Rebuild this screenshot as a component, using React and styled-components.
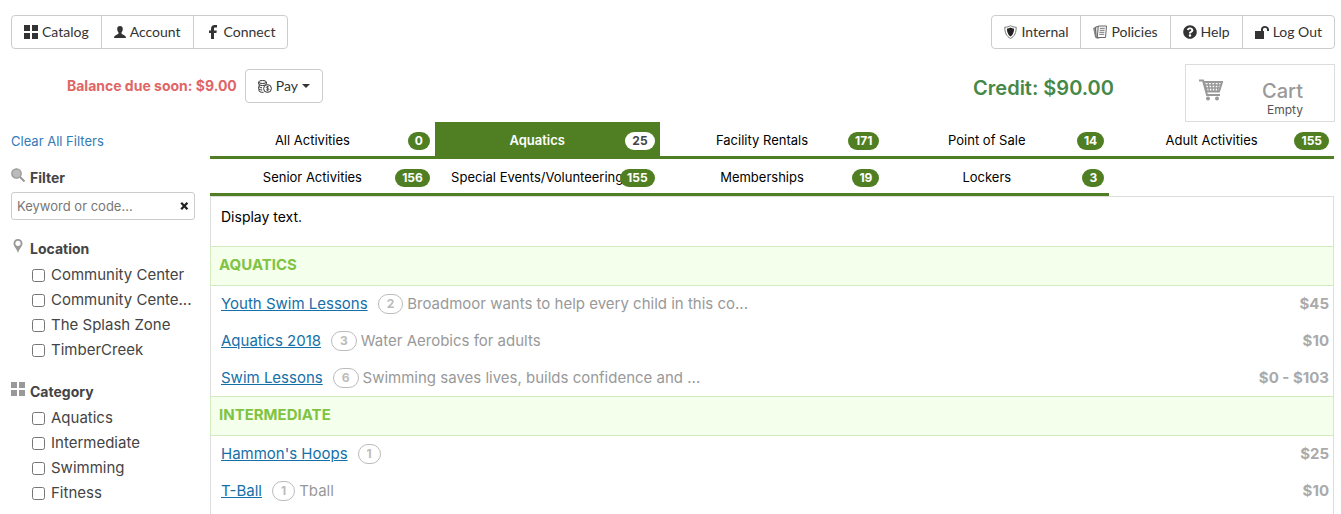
import React, { useState } from "react";
import styled, { createGlobalStyle, css } from "styled-components";
import { FaQuestionCircle } from "react-icons/fa";

const GlobalStyle = createGlobalStyle`
  * {
    box-sizing: border-box;
  }

  body {
    margin: 0;
    background: #fff;
    color: #333;
    font-family: Inter, "Open Sans", sans-serif;
    font-size: 14px;
    line-height: 20px;
    overflow: hidden;
  }

  ul, h2, h3, p {
    margin: 0;
    padding: 0;
  }

  ul {
    list-style: none;
  }
`;

const Header = styled.header`
  padding: 15px 6px 0 11px;
`;

const Bar = styled.div`
  display: flex;
  justify-content: space-between;
`;

const ButtonGroup = styled.nav`
  display: flex;

  button + button {
    margin-left: -1px;
  }

  button:not(:first-child) {
    border-top-left-radius: 0;
    border-bottom-left-radius: 0;
  }

  button:not(:last-child) {
    border-top-right-radius: 0;
    border-bottom-right-radius: 0;
  }
`;

const NavButton = styled.button`
  display: flex;
  align-items: center;
  gap: 4px;
  height: 34px;
  padding: 0 12px;
  border: 1px solid #ccc;
  border-radius: 4px;
  background: #fff;
  color: #333;
  font-family: Lato, sans-serif;
  font-size: 14px;
  line-height: 20px;
  white-space: nowrap;
`;

const Caret = styled.span`
  border-top: 4px solid #333;
  border-left: 4px solid transparent;
  border-right: 4px solid transparent;
`;

const Account = styled(Bar)`
  margin-top: 15px;
  align-items: flex-start;
`;

const Balance = styled.div`
  display: flex;
  align-items: center;
  justify-content: flex-end;
  gap: 8px;
  width: 312px;
  padding-top: 5px;
  color: #e06666;
  font-weight: 700;
  white-space: nowrap;
`;

const Totals = styled.div`
  display: flex;
  gap: 71px;
`;

const Credit = styled.div`
  padding-top: 10px;
  color: #468847;
  font-size: 20px;
  font-weight: 600;
  line-height: 28px;
`;

const Cart = styled.button`
  display: flex;
  justify-content: space-between;
  width: 150px;
  height: 58px;
  padding: 14px 31px 0 13px;
  border: 1px solid #ddd;
  background: #fff;
  color: #999;
  font-family: inherit;
`;

const CartLabel = styled.span`
  display: flex;
  flex-direction: column;
  align-items: flex-end;
  font-size: 20px;
  font-weight: 500;
  line-height: 24px;

  small {
    color: #555;
    font-size: 12px;
    font-weight: 400;
    line-height: 14px;
  }
`;

const Main = styled.main`
  display: grid;
  grid-template-columns: 184px minmax(0, 1fr);
  gap: 15px;
  padding: 0 7px 0 11px;
`;

const Sidebar = styled.aside`
  padding-top: 9px;
`;

const ClearLink = styled.a`
  display: block;
  color: #337ab7;
  font-size: 13px;
  text-decoration: none;
`;

const FilterTitle = styled.h3`
  display: grid;
  grid-template-columns: 14px 1fr;
  gap: 5px;
  margin-top: ${({ $gap }) => $gap}px;
  color: #444;
  font-size: 14px;
  font-weight: 700;

  svg {
    color: #999;
  }
`;

const SearchBox = styled.label`
  display: flex;
  align-items: center;
  height: 28px;
  margin-top: 4px;
  padding: 0 5px;
  border: 1px solid #ccc;
  border-radius: 3px;

  input {
    flex: 1;
    min-width: 0;
    padding: 0;
    border: 0;
    outline: 0;
    background: none;
    font-family: inherit;
    font-size: 13px;
  }

  input::placeholder {
    color: #777;
  }

  button {
    display: flex;
    padding: 0;
    border: 0;
    background: none;
    color: #222;
  }
`;

const Options = styled.ul`
  padding: 4px 0 0 21px;
`;

const Option = styled.label`
  display: flex;
  align-items: center;
  gap: 6px;
  height: 25px;
  color: #444;
  font-size: 15px;
  white-space: nowrap;

  input {
    width: 13px;
    height: 13px;
    margin: 0;
    flex: none;
  }

  span {
    padding-bottom: 2px;
  }
`;

const Tabs = styled.nav`
  display: grid;
  grid-template-columns: repeat(5, 1fr);
`;

const Count = styled.span`
  position: absolute;
  top: 10px;
  right: 5px;
  padding: 0 7px;
  border-radius: 9px;
  background: #4f7f22;
  color: #fff;
  font-size: 12px;
  font-weight: 700;
  line-height: 18px;
`;

const Tab = styled.button`
  position: relative;
  height: 37px;
  padding: 2px 30px 0 10px;
  border: 0;
  border-bottom: 3px solid #4f7f22;
  background: #fff;
  color: #000;
  font-family: inherit;
  font-size: 13px;
  white-space: nowrap;
  overflow: hidden;

  ${({ $active }) =>
    $active &&
    css`
      background: #4f7f22;
      color: #fff;
      font-weight: 600;

      ${Count} {
        background: #fff;
        color: #444;
      }
    `}
`;

const Panel = styled.section`
  padding-bottom: 20px;
  border: 1px solid #ddd;
`;

const Intro = styled.p`
  padding: 10px 10px 20px;
  color: #000;
`;

const GroupTitle = styled.h2`
  margin: -1px -1px 0;
  padding: 8px 8px 10px;
  border: 1px solid #d4eabf;
  background: #f4ffec;
  color: #80c342;
  font-size: 15px;
  font-weight: 700;
  text-transform: uppercase;
`;

const Activity = styled.li`
  display: flex;
  align-items: center;
  height: 37px;
  padding: 0 4px 2px 10px;
  color: #999;
  font-size: 15px;
  white-space: nowrap;

  a {
    color: #156fa8;
  }
`;

const Sessions = styled.span`
  margin: 0 4px 0 10px;
  padding: 0 8px;
  border: 1px solid #bbb;
  border-radius: 10px;
  color: #bbb;
  font-size: 12px;
  font-weight: 700;
  line-height: 18px;
`;

const Price = styled.span`
  margin-left: auto;
  color: #aaa;
  font-weight: 700;
`;

const GridIcon = () => (
  <svg width="14" height="14" viewBox="0 0 14 14" fill="currentColor" aria-hidden="true">
    <path d="M0 0h6v6H0zM8 0h6v6H8zM0 8h6v6H0zM8 8h6v6H8z" />
  </svg>
);

const UserIcon = () => (
  <svg width="12" height="12" viewBox="0 0 12 12" fill="currentColor" aria-hidden="true">
    <path d="M6 0C4.200 0 3.100 1.200 3.200 3c.1 1.500.5 2.600 1.300 3.400v1.200C4.500 8.600 0 9 0 12h12c0-3-4.500-3.400-4.500-4.400V6.400C8.300 5.600 8.700 4.500 8.800 3 8.900 1.200 7.800 0 6 0z" />
  </svg>
);

const FacebookIcon = () => (
  <svg width="14" height="14" viewBox="0 0 14 14" fill="currentColor" aria-hidden="true">
    <path d="M5 14V8H3V5.500h2V4c0-2.600 1.300-4 3.700-4H11v2.600H9.300c-.9 0-1.300.4-1.300 1.200v1.700h2.800L10.400 8H8v6z" />
  </svg>
);

const ShieldIcon = () => (
  <svg width="13" height="14" viewBox="0 0 13 14" aria-hidden="true">
    <path d="M6.500.6C5 1.700 3 2.200.8 2.200c0 5.300 1.500 9.200 5.700 11.200 4.200-2 5.700-5.900 5.700-11.200C10 2.200 8 1.700 6.500.6z" fill="#fff" stroke="#777" />
    <path d="M6.500 2.600C5.400 3.300 4.200 3.700 2.900 3.800c.1 3.500 1.100 6.200 3.600 7.800 2.500-1.600 3.500-4.300 3.600-7.800-1.300-.1-2.500-.5-3.600-1.200z" fill="#222" />
  </svg>
);

const PapersIcon = () => (
  <svg width="14" height="14" viewBox="0 0 14 14" fill="#fff" stroke="#666" aria-hidden="true">
    <path d="M4 2 .6 3.200l2 9.300 2.200.8z" fill="#999" stroke="#888" />
    <path d="m5 1.500-2.700.7.900 10 3 .9" fill="#ddd" />
    <path d="M5.300 1h8.200l-1 11.500H4.300z" />
    <path d="M6.800 3.300h5M6.600 5.300h5M6.400 7.300h5M6.200 9.300h5" stroke="#777" />
  </svg>
);

const UnlockIcon = () => (
  <svg width="14" height="13" viewBox="0 0 14 13" fill="currentColor" aria-hidden="true">
    <path d="M0 5h6V3.500C6 1.400 7.600 0 9.800 0S14 1.400 14 3.500V5h-2V3.500c0-1-.8-1.700-2-1.700S8 2.500 8 3.500V5h1v8H0z" />
  </svg>
);

const CoinsIcon = () => (
  <svg width="14" height="13" viewBox="0 0 14 13" fill="none" stroke="#333" aria-hidden="true">
    <ellipse cx="4.500" cy="2" rx="3.800" ry="1.500" />
    <path d="M.7 2v2c0 .8 1.700 1.500 3.800 1.500S8.300 4.800 8.300 4V2M1.200 4.500v2c0 .7 1 1.200 2.800 1.300M.7 6.500v2c0 .8 1.200 1.400 3.500 1.500M1 8.800v2c0 .8 1.500 1.500 4.500 1.600" />
    <circle cx="9.500" cy="8.500" r="3.900" fill="#fff" />
    <path d="M11 7c-.4-.5-2.700-.7-2.700.4 0 1.200 2.700.8 2.700 2 0 1-2.400.9-2.900.2M9.600 5.600v5.800" strokeWidth=".8" />
  </svg>
);

const CartIcon = () => (
  <svg width="24" height="22" viewBox="0 0 24 22" fill="none" stroke="#999" aria-hidden="true">
    <path d="M0 1.500h4L8 16h13" strokeWidth="2" />
    <path d="M5 3h18l-3 9.500H8z" strokeWidth="2" />
    <path d="M5.500 6h17M6.500 9h15M9 3l1.500 9.500M12.500 3l.8 9.500M16 3v9.500M19.500 3l-1 9.500" strokeWidth="1.500" />
    <circle cx="9" cy="19.500" r="2" fill="#999" stroke="none" />
    <circle cx="18" cy="19.500" r="2" fill="#999" stroke="none" />
  </svg>
);

const SearchIcon = () => (
  <svg width="14" height="14" viewBox="0 0 14 14" stroke="#999" aria-hidden="true">
    <circle cx="5.500" cy="5.500" r="4.700" fill="#bbb" strokeWidth="1.300" />
    <path d="m9 9 4.500 4.500" strokeWidth="2" />
  </svg>
);

const PinIcon = () => (
  <svg width="14" height="14" viewBox="0 0 14 14" fill="currentColor" aria-hidden="true">
    <path fillRule="evenodd" d="M7 0C4.400 0 2.500 1.900 2.500 4.400 2.500 7.200 6 10 7 14c1-4 4.500-6.800 4.500-9.600C11.500 1.900 9.600 0 7 0zm0 1.700a2.600 2.600 0 1 1 0 5.200 2.600 2.600 0 0 1 0-5.200z" />
  </svg>
);

const ClearIcon = () => (
  <svg width="9" height="8" viewBox="0 0 9 8" aria-hidden="true">
    <path d="m1.200.8 6.200 6.400M7.400.8 1.200 7.200" stroke="currentColor" strokeWidth="2.300" />
  </svg>
);

const tabs = [
  ["All Activities", 0],
  ["Aquatics", 25],
  ["Facility Rentals", 171],
  ["Point of Sale", 14],
  ["Adult Activities", 155],
  ["Senior Activities", 156],
  ["Special Events/Volunteering", 155],
  ["Memberships", 19],
  ["Lockers", 3]
];

const filters = [
  {
    title: "Location",
    icon: <PinIcon />,
    options: [
      "Community Center",
      "Community Cente...",
      "The Splash Zone",
      "TimberCreek"
    ]
  },
  {
    title: "Category",
    icon: <GridIcon />,
    options: ["Aquatics", "Intermediate", "Swimming", "Fitness"]
  }
];

const groups = [
  {
    title: "Aquatics",
    items: [
      {
        name: "Youth Swim Lessons",
        sessions: 2,
        text: "Broadmoor wants to help every child in this co...",
        price: "$45"
      },
      {
        name: "Aquatics 2018",
        sessions: 3,
        text: "Water Aerobics for adults",
        price: "$10"
      },
      {
        name: "Swim Lessons",
        sessions: 6,
        text: "Swimming saves lives, builds confidence and ...",
        price: "$0 - $103"
      }
    ]
  },
  {
    title: "Intermediate",
    items: [
      { name: "Hammon's Hoops", sessions: 1, text: "", price: "$25" },
      { name: "T-Ball", sessions: 1, text: "Tball", price: "$10" }
    ]
  }
];

const FilterGroup = ({ title, icon, options }) => (
  <section>
    <FilterTitle $gap={19}>
      {icon}
      {title}
    </FilterTitle>
    <Options>
      {options.map(option => (
        <li key={option}>
          <Option>
            <input type="checkbox" />
            <span>{option}</span>
          </Option>
        </li>
      ))}
    </Options>
  </section>
);

const App = () => {
  const [activeTab, setActiveTab] = useState("Aquatics");
  const [keyword, setKeyword] = useState("");

  return (
    <>
      <GlobalStyle />
      <Header>
        <Bar>
          <ButtonGroup>
            <NavButton><GridIcon />Catalog</NavButton>
            <NavButton><UserIcon />Account</NavButton>
            <NavButton><FacebookIcon />Connect</NavButton>
          </ButtonGroup>
          <ButtonGroup>
            <NavButton><ShieldIcon />Internal</NavButton>
            <NavButton><PapersIcon />Policies</NavButton>
            <NavButton><FaQuestionCircle size={14} />Help</NavButton>
            <NavButton><UnlockIcon />Log Out</NavButton>
          </ButtonGroup>
        </Bar>
        <Account>
          <Balance>
            Balance due soon: $9.00
            <NavButton><CoinsIcon />Pay<Caret /></NavButton>
          </Balance>
          <Totals>
            <Credit>Credit: $90.00</Credit>
            <Cart>
              <CartIcon />
              <CartLabel>
                Cart
                <small>Empty</small>
              </CartLabel>
            </Cart>
          </Totals>
        </Account>
      </Header>
      <Main>
        <Sidebar>
          <ClearLink href="#">Clear All Filters</ClearLink>
          <FilterTitle $gap={17}>
            <SearchIcon />
            Filter
          </FilterTitle>
          <SearchBox>
            <input
              aria-label="Filter"
              placeholder="Keyword or code..."
              value={keyword}
              onChange={e => setKeyword(e.target.value)}
            />
            <button aria-label="Clear keyword" onClick={() => setKeyword("")}>
              <ClearIcon />
            </button>
          </SearchBox>
          {filters.map(filter => (
            <FilterGroup key={filter.title} {...filter} />
          ))}
        </Sidebar>
        <div>
          <Tabs>
            {tabs.map(([name, count]) => (
              <Tab
                key={name}
                $active={name === activeTab}
                onClick={() => setActiveTab(name)}
              >
                {name}
                <Count>{count}</Count>
              </Tab>
            ))}
          </Tabs>
          <Panel>
            <Intro>Display text.</Intro>
            {groups.map(group => (
              <section key={group.title}>
                <GroupTitle>{group.title}</GroupTitle>
                <ul>
                  {group.items.map(item => (
                    <Activity key={item.name}>
                      <a href="#">{item.name}</a>
                      <Sessions>{item.sessions}</Sessions>
                      {item.text}
                      <Price>{item.price}</Price>
                    </Activity>
                  ))}
                </ul>
              </section>
            ))}
          </Panel>
        </div>
      </Main>
    </>
  );
};

export default App;
